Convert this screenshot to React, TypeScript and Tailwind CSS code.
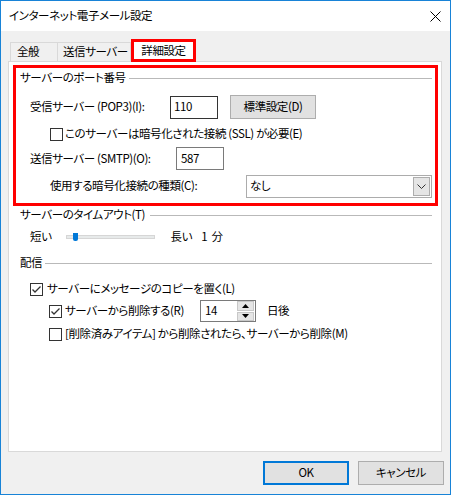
import React from 'react';

function CheckBox({ checked }: { checked?: boolean }) {
    return (
        <span className="w-[13px] h-[13px] border border-[#333333] bg-white flex items-center justify-center shrink-0">
            {checked && (
                <svg width="11" height="11" viewBox="0 0 11 11">
                    <polyline points="1.5,5.5 4,8 9.5,2.5" fill="none" stroke="#333333" strokeWidth="1.3" />
                </svg>
            )}
        </span>
    );
}

function GroupHeading({ label, lineGap }: { label: string; lineGap: string }) {
    return (
        <div className="flex items-center h-[18px]">
            <span className="whitespace-nowrap">{label}</span>
            <div className={`flex-1 h-px bg-[#b9b9b9] ${lineGap}`} />
        </div>
    );
}

export default function App() {
    return (
        <div className="w-[451px] h-[495px] border border-[#1883d7] bg-[#f0f0f0] flex flex-col text-[11.5px] tracking-[-0.4px] leading-none text-black font-['Noto_Sans_CJK_JP',sans-serif] [font-feature-settings:'palt'] overflow-hidden">
            {/* Title bar */}
            <div className="h-[30px] bg-white flex items-center pl-[8px] pr-[9px] shrink-0">
                <span className="flex-1">インターネット電子メール設定</span>
                <svg width="11" height="11" viewBox="0 0 11 11">
                    <line x1="0.5" y1="0.5" x2="10.5" y2="10.5" stroke="#000" strokeWidth="1" />
                    <line x1="10.5" y1="0.5" x2="0.5" y2="10.5" stroke="#000" strokeWidth="1" />
                </svg>
            </div>

            {/* Body */}
            <div className="pt-[8px] flex flex-col">
                {/* Tabs */}
                <div className="flex items-end h-[22px] ml-[9px]">
                    <div className="h-[19px] w-[48px] border border-b-0 border-[#d9d9d9] flex items-center pl-[6px] whitespace-nowrap">全般</div>
                    <div className="h-[19px] w-[73px] border border-l-0 border-b-0 border-[#d9d9d9] flex items-center pl-[5px] whitespace-nowrap">送信サーバー</div>
                    <div className="relative z-10 -mb-px h-[23px] w-[65px] border-[3px] border-[#ff0000] bg-white flex items-center justify-center whitespace-nowrap">詳細設定</div>
                </div>

                {/* Panel */}
                <div className="ml-[7px] w-[434px] h-[391px] bg-white border border-[#d9d9d9] flex flex-col">
                    {/* Port numbers (highlighted) */}
                    <div className="ml-[4px] mt-[3px] w-[425px] h-[141px] border-[3px] border-[#ff0000] flex flex-col">
                        <div className="flex items-center h-[20px] pl-[4px] pr-[3px]">
                            <span className="whitespace-nowrap">サーバーのポート番号</span>
                            <div className="flex-1 h-px bg-[#b9b9b9] ml-[3px]" />
                        </div>
                        <div className="flex items-center h-[24px] mt-[7px] pl-[14px]">
                            <span className="w-[140px] whitespace-nowrap">受信サーバー (POP3)(I):</span>
                            <div className="w-[48px] h-[23px] border border-[#333333] flex items-center pl-[3px]">110</div>
                            <div className="ml-[12px] w-[86px] h-[24px] border border-[#adadad] bg-[#e1e1e1] flex items-center justify-center">標準設定(D)</div>
                        </div>
                        <div className="flex items-center h-[22px] mt-[4px] pl-[34px] gap-[2px]">
                            <CheckBox />
                            <span className="whitespace-nowrap">このサーバーは暗号化された接続 (SSL) が必要(E)</span>
                        </div>
                        <div className="flex items-center h-[23px] mt-[2px] pl-[14px]">
                            <span className="w-[146px] whitespace-nowrap">送信サーバー (SMTP)(O):</span>
                            <div className="w-[48px] h-[23px] border border-[#7a7a7a] flex items-center pl-[4px]">587</div>
                        </div>
                        <div className="flex items-center h-[24px] mt-[4px] pl-[34px]">
                            <span className="w-[196px] whitespace-nowrap">使用する暗号化接続の種類(C):</span>
                            <div className="w-[186px] h-[23px] border border-[#acacac] flex items-center justify-between pl-[3px] pr-[1px]">
                                <span>なし</span>
                                <div className="w-[17px] h-[19px] border border-[#adadad] bg-[#e5e5e5] flex items-center justify-center">
                                    <svg width="9" height="5" viewBox="0 0 9 5">
                                        <polyline points="0.5,0.5 4.5,4.5 8.5,0.5" fill="none" stroke="#333" strokeWidth="1" />
                                    </svg>
                                </div>
                            </div>
                        </div>
                    </div>

                    {/* Timeout */}
                    <div className="pl-[11px] pr-[9px]">
                        <GroupHeading label="サーバーのタイムアウト(T)" lineGap="ml-[5px]" />
                    </div>
                    <div className="flex items-center h-[24px] mt-[1px] pl-[21px]">
                        <span>短い</span>
                        <div className="relative ml-[14px] w-[89px] h-[4px] bg-[#e7eaea] border border-[#d6d6d6]">
                            <div className="absolute left-[6px] -top-[3px] w-[5px] h-[8px] bg-[#0078d7] rounded-b-[2px]" />
                        </div>
                        <span className="ml-[16px]">長い</span>
                        <span className="ml-[9px]">1&nbsp;&nbsp;分</span>
                    </div>

                    {/* Delivery */}
                    <div className="pl-[11px] pr-[9px] mt-[5px]">
                        <GroupHeading label="配信" lineGap="ml-[3px]" />
                    </div>
                    <div className="flex items-center h-[22px] mt-[6px] pl-[21px] gap-[4px]">
                        <CheckBox checked />
                        <span className="whitespace-nowrap">サーバーにメッセージのコピーを置く(L)</span>
                    </div>
                    <div className="flex items-center h-[22px] pl-[40px]">
                        <CheckBox checked />
                        <span className="ml-[3px] w-[135px] whitespace-nowrap">サーバーから削除する(R)</span>
                        <div className="w-[56px] h-[22px] border border-[#7a7a7a] flex items-center">
                            <span className="flex-1 pl-[4px]">14</span>
                            <div className="w-[17px] h-[20px] flex flex-col gap-px mr-px">
                                <div className="flex-1 bg-[#e5e5e5] border border-[#c8c8c8] flex items-center justify-center">
                                    <svg width="7" height="4" viewBox="0 0 7 4"><polygon points="0,4 3.5,0 7,4" fill="#000" /></svg>
                                </div>
                                <div className="flex-1 bg-[#e5e5e5] border border-[#c8c8c8] flex items-center justify-center">
                                    <svg width="7" height="4" viewBox="0 0 7 4"><polygon points="0,0 3.5,4 7,0" fill="#000" /></svg>
                                </div>
                            </div>
                        </div>
                        <span className="ml-[11px]">日後</span>
                    </div>
                    <div className="flex items-center h-[22px] mt-[1px] pl-[40px] gap-[3px]">
                        <CheckBox />
                        <span className="whitespace-nowrap">[削除済みアイテム] から削除されたら、サーバーから削除(M)</span>
                    </div>
                </div>

                {/* Dialog buttons */}
                <div className="flex justify-end gap-[9px] mt-[9px] pr-[6px]">
                    <div className="w-[86px] h-[24px] border-2 border-[#0078d7] bg-[#e1e1e1] flex items-center justify-center">OK</div>
                    <div className="w-[86px] h-[24px] border border-[#adadad] bg-[#e1e1e1] flex items-center justify-center">キャンセル</div>
                </div>
            </div>
        </div>
    );
}
